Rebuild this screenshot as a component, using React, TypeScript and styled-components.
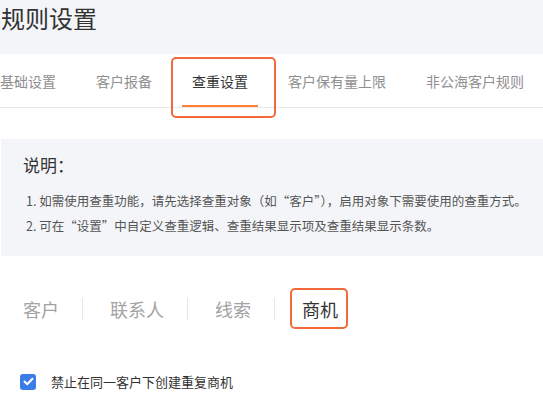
import styled, {createGlobalStyle} from "styled-components";

const GlobalStyle = createGlobalStyle`
  html, body {
    margin: 0;
    padding: 0;
    background: #ffffff;
  }
  body {
    font-family: "Noto Sans CJK SC", "Noto Sans", sans-serif;
    color: #333333;
    width: 543px;
    overflow: hidden;
  }
`;

const ACCENT = "#f26a3b";

const Header = styled.header`
  height: 54px;
  background: #f4f5f8;
  box-sizing: border-box;
  padding: 2px 0 0 1px;
`;

const Title = styled.h1`
  margin: 0;
  font-size: 24px;
  font-weight: 400;
  line-height: 32px;
  color: #333333;
`;

const TabBar = styled.nav`
  height: 54px;
  border-bottom: 1px solid #e8e8e8;
  display: flex;
  gap: 20px;
  margin-left: -10px;
  box-sizing: border-box;
`;

const Tab = styled.div<{$active?: boolean}>`
  position: relative;
  height: 53px;
  padding: 0 10px;
  display: flex;
  align-items: center;
  font-size: 14px;
  white-space: nowrap;
  color: ${(p) => (p.$active ? "#333333" : "#8f8f8f")};
  box-sizing: border-box;

  &::after {
    content: "";
    display: ${(p) => (p.$active ? "block" : "none")};
    position: absolute;
    left: 0;
    right: 0;
    bottom: 0;
    height: 2px;
    background: #ff8036;
  }
`;

// annotation frame drawn over the highlighted item
const Marker = styled.span<{$l: number; $r: number; $t: number; $b: number}>`
  position: absolute;
  left: ${(p) => p.$l}px;
  right: ${(p) => p.$r}px;
  top: ${(p) => p.$t}px;
  bottom: ${(p) => p.$b}px;
  border: 2.5px solid ${ACCENT};
  border-radius: 5px;
  pointer-events: none;
`;

const Notice = styled.section`
  margin: 31px 0 0 1px;
  background: #f4f5f8;
  height: 117px;
  box-sizing: border-box;
  padding: 13px 0 0 22px;
`;

const NoticeTitle = styled.h3`
  margin: 0;
  font-size: 17px;
  font-weight: 400;
  line-height: 26px;
  color: #333333;
`;

const NoticeList = styled.ol`
  margin: 10px 0 0;
  padding: 0 0 0 3px;
  list-style: none;
`;

const NoticeItem = styled.li`
  font-size: 12.5px;
  line-height: 25px;
  color: #555555;
  white-space: nowrap;
`;

const ObjectTabs = styled.div`
  display: flex;
  margin-top: 42px;
`;

const ObjectTab = styled.div<{$active?: boolean}>`
  position: relative;
  font-size: 18px;
  line-height: 22px;
  padding: 0 23px 0 27px;
  color: ${(p) => (p.$active ? "#333333" : "#a3a3a3")};
  border-left: 1px solid #e6e6e6;

  &:first-child {
    padding-left: 23px;
    border-left: none;
  }
`;

const CheckRow = styled.label`
  display: flex;
  align-items: center;
  gap: 15px;
  margin: 52px 0 0 20px;
  font-size: 13px;
  color: #333333;
`;

const CheckBox = styled.span`
  width: 16px;
  height: 16px;
  border-radius: 3px;
  background: #3a7ce8;
  display: flex;
  align-items: center;
  justify-content: center;
`;

const tabs = ["基础设置", "客户报备", "查重设置", "客户保有量上限", "非公海客户规则"];
const objects = ["客户", "联系人", "线索", "商机"];

export default function App() {
  return (
    <>
      <GlobalStyle />
      <Header>
        <Title>规则设置</Title>
      </Header>
      <TabBar>
        {tabs.map((t) => (
          <Tab key={t} $active={t === "查重设置"}>
            {t}
            {t === "查重设置" && <Marker $l={-11} $r={-18} $t={3} $b={-11} />}
          </Tab>
        ))}
      </TabBar>
      <Notice>
        <NoticeTitle>说明：</NoticeTitle>
        <NoticeList>
          <NoticeItem>
            1. 如需使用查重功能，请先选择查重对象（如“客户”），启用对象下需要使用的查重方式。
          </NoticeItem>
          <NoticeItem>2. 可在“设置”中自定义查重逻辑、查重结果显示项及查重结果显示条数。</NoticeItem>
        </NoticeList>
      </Notice>
      <ObjectTabs>
        {objects.map((o) => (
          <ObjectTab key={o} $active={o === "商机"}>
            {o}
            {o === "商机" && <Marker $l={15} $r={13} $t={-10} $b={-9} />}
          </ObjectTab>
        ))}
      </ObjectTabs>
      <CheckRow>
        <CheckBox>
          <svg width="11" height="9" viewBox="0 0 11 9">
            <path d="M1.5 4.5 L4.2 7.2 L9.5 1.8" fill="none" stroke="#fff" strokeWidth="2" strokeLinecap="round" strokeLinejoin="round" />
          </svg>
        </CheckBox>
        禁止在同一客户下创建重复商机
      </CheckRow>
    </>
  );
}
